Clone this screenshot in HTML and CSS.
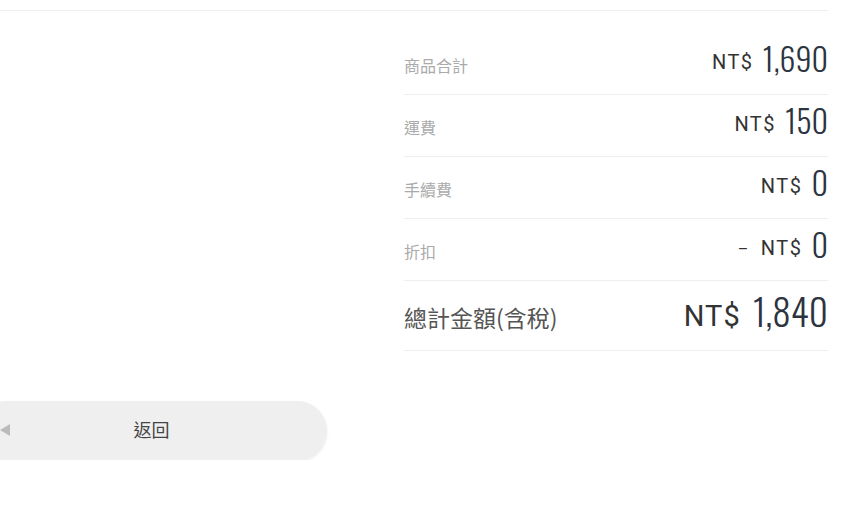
FILE: index.html
```html
<!DOCTYPE html>
<html lang="zh-Hant">
<head>
  <meta charset="UTF-8" />
  <meta name="viewport" content="width=device-width, initial-scale=1" />
  <title>購物車 - 結帳</title>
  <link rel="stylesheet" href="styles.css">
</head>
<body>
  <div class="page">
    <div class="checkout">
      <div class="left-col"></div>

      <div class="summary">
        <div class="row">
          <span class="label">商品合計</span>
          <span class="price"><span class="cur">NT$</span><span class="num">1,690</span></span>
        </div>
        <div class="row">
          <span class="label">運費</span>
          <span class="price"><span class="cur">NT$</span><span class="num">150</span></span>
        </div>
        <div class="row">
          <span class="label">手續費</span>
          <span class="price"><span class="cur">NT$</span><span class="num">0</span></span>
        </div>
        <div class="row">
          <span class="label">折扣</span>
          <span class="price"><span class="cur"><span class="minus">–</span>NT$</span><span class="num">0</span></span>
        </div>
        <div class="row total">
          <span class="label">總計金額(含稅)</span>
          <span class="price"><span class="cur">NT$</span><span class="num">1,840</span></span>
        </div>
      </div>
    </div>

    <div class="actions">
      <button class="back-btn"><span class="arrow"></span>返回</button>
    </div>
  </div>
</body>
</html>
```

FILE: styles.css
```css
html, body {
  margin: 0;
  padding: 0;
}

body {
  font-family: Roboto, "Noto Sans CJK TC", sans-serif;
  background-color: #fff;
  color: #333;
}

.page {
  width: 828px;
  padding-top: 10px;
}

.checkout {
  border-top: 1px solid #eee;
  display: grid;
  grid-template-columns: 404px 424px;
}

.summary {
  padding-top: 22px;
}

.row {
  display: flex;
  justify-content: space-between;
  align-items: baseline;
  height: 62px;
  padding-top: 9px;
  box-sizing: border-box;
  border-bottom: 1px solid #eee;
}

.label {
  font-family: "Noto Sans CJK TC", sans-serif;
  font-size: 16px;
  color: #aaa;
  line-height: 1;
}

.price {
  line-height: 1;
  color: #2b3440;
  white-space: nowrap;
}

.cur {
  font-family: Roboto, sans-serif;
  font-size: 20px;
  letter-spacing: 1.5px;
  margin-right: 9px;
  color: #333;
  vertical-align: 3px;
}

.minus {
  font-size: 16px;
  margin-right: 11px;
}

.num {
  font-family: Oswald, "Liberation Sans Narrow", "DejaVu Sans Condensed", sans-serif;
  font-weight: 350;
  font-size: 32px;
}

.row.total {
  height: 70px;
  padding-top: 11px;
}

.row.total .label {
  font-size: 23px;
  color: #555;
}

.row.total .cur {
  font-size: 29px;
  letter-spacing: 1px;
  margin-right: 12px;
  vertical-align: 1px;
}

.row.total .num {
  font-size: 37px;
}

.actions {
  padding-top: 50px;
}

.back-btn {
  margin-left: -24px;
  width: 351px;
  height: 59px;
  padding-bottom: 4px;
  border: none;
  border-radius: 30px;
  background: #efefef;
  box-shadow: 0 2px 3px rgba(0, 0, 0, 0.08);
  font-family: "Noto Sans CJK TC", sans-serif;
  font-size: 18px;
  color: #444;
  position: relative;
  cursor: pointer;
}

.back-btn .arrow {
  position: absolute;
  left: 24px;
  top: 23px;
  width: 0;
  height: 0;
  border-top: 6px solid transparent;
  border-bottom: 6px solid transparent;
  border-right: 10px solid #bbb;
}
```
